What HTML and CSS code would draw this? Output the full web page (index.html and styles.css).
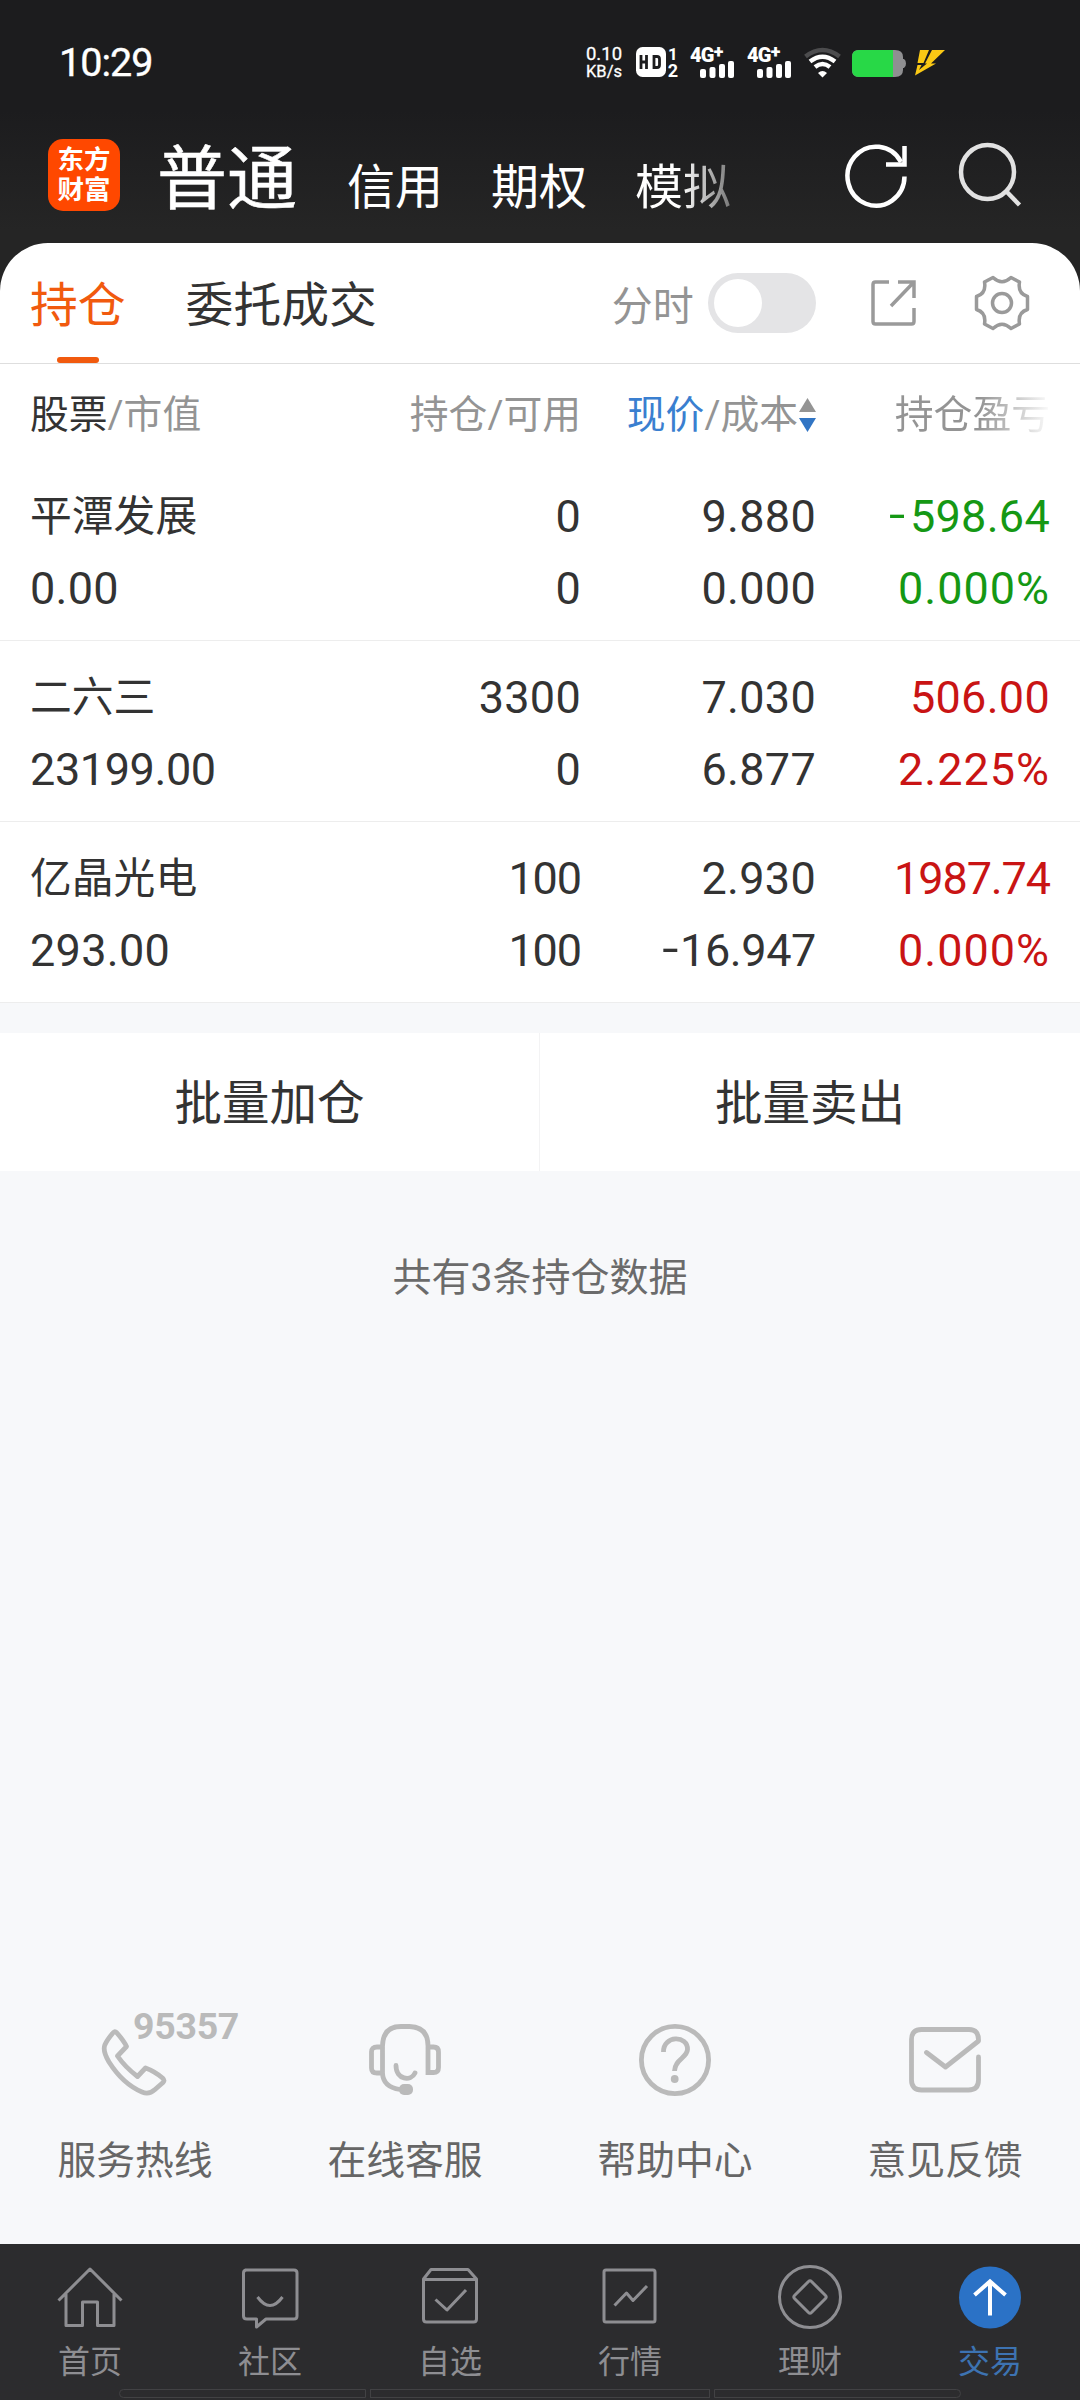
FILE: index.html
```html
<!DOCTYPE html>
<html lang="zh-CN">
<head>
<meta charset="utf-8">
<title>持仓</title>
<link rel="stylesheet" href="styles.css">
</head>
<body>
<div class="app">
  <header class="top">
    <div class="status">
      <span class="clock">10:29</span>
      <div class="indicators">
        <span class="net"><span>0.10</span><span>KB/s</span></span>
        <svg class="hd" width="31" height="31" viewBox="0 0 31 31"><rect width="30" height="30" rx="6.500" fill="#fff"/><path d="M5 8v14M10.500 8v14M5 15h5.500M18 9.500v11h3q2.500 0 2.500-2.500v-6q0-2.500-2.500-2.500z" fill="none" stroke="#1c1c1e" stroke-width="2.800"/></svg>
        <span class="sims"><span>1</span><span>2</span></span>
        <span class="sig"><span class="gen">4G<small>+</small></span><svg width="34" height="17" viewBox="0 0 34 17" fill="#fff"><rect y="8" width="6" height="9" rx="2"/><rect x="9.500" y="6" width="6" height="11" rx="2"/><rect x="19" y="3" width="6" height="14" rx="2"/><rect x="28" width="6" height="17" rx="2"/></svg></span>
        <span class="sig"><span class="gen">4G<small>+</small></span><svg width="34" height="17" viewBox="0 0 34 17" fill="#fff"><rect y="8" width="6" height="9" rx="2"/><rect x="9.500" y="6" width="6" height="11" rx="2"/><rect x="19" y="3" width="6" height="14" rx="2"/><rect x="28" width="6" height="17" rx="2"/></svg></span>
        <svg class="wifi" width="38" height="31" viewBox="0 0 38 31" fill="none"><path d="M1.500 9.500Q18.500-3.500 35.500 9.500" stroke="#4c4c4e" stroke-width="4.500"/><path d="M6 14.500Q18.500 5 31 14.500M11 20Q18.500 14 26 20" stroke="#fff" stroke-width="4.500"/><path d="M14 26q4.500-4 9 0l-4.500 4.500z" fill="#fff"/></svg>
        <svg class="batt" width="55" height="27" viewBox="0 0 55 27"><path d="M7 0h36q8 0 8 7v2h1q2 1 2 4.500t-2 4.500h-1v2q0 7-8 7H7q-7 0-7-7V7q0-7 7-7z" fill="#8f8f91"/><path d="M7 0h34v27H7q-7 0-7-7V7q0-7 7-7z" fill="#28d847"/></svg>
        <svg class="bolt" width="30" height="26" viewBox="0 0 30 26"><path d="M5 0h9L8.500 13H2.500zM17 0h13L16 13.500h5L0 25.500l2.500-10.500h4L4 20l8-6.500h-2z" fill="#fbc914"/></svg>
      </div>
    </div>
    <div class="brandbar">
      <div class="logo"><span>东方</span><span>财富</span></div>
      <nav class="modes"><span class="mode main">普通</span><span class="mode">信用</span><span class="mode">期权</span><span class="mode fade">模拟</span></nav>
      <svg class="refresh" width="64" height="66" viewBox="0 0 64 66" fill="none" stroke="#fff" stroke-width="4.500"><path d="M59.500 33.500A28.500 29.500 0 1 1 56 19"/><path d="M41 21.500h18.500V3"/></svg>
      <svg class="search" width="64" height="66" viewBox="0 0 64 66" fill="none" stroke="#e2e2e2" stroke-width="4.500"><ellipse cx="29.500" cy="30" rx="26.500" ry="27"/><path d="M48 49l13.500 14"/></svg>
    </div>
  </header>

  <main class="sheet">
    <div class="tabs">
      <span class="tab on">持仓</span>
      <span class="tab">委托成交</span>
      <span class="tick">分时</span>
      <span class="switch"></span>
      <svg class="share" width="46" height="48" viewBox="0 0 46 48" fill="none" stroke="#9a9a9a" stroke-width="3.500"><path d="M18 3H4.500Q2 3 2 5.500v37Q2 45 4.500 45h36q2.500 0 2.500-2.500V29M27 3h16v16M43 3L20 27"/></svg>
      <svg class="gear" width="56" height="56" viewBox="0 0 56 56" fill="none" stroke="#9a9a9a" stroke-width="3.500"><circle cx="28" cy="28" r="9.500"/><path d="M19 2.500q9 8.500 18 0l8.500 4.500q-2 11.500 8 14.500v13q-10 3-8 14.500l-8.500 4.500q-9-8.500-18 0l-8.500-4.500q2-11.500-8-14.500v-13q10-3 8-14.500z" stroke-linejoin="round"/></svg>
    </div>

    <div class="grid head">
      <span class="l"><b>股票</b>/市值</span>
      <span>持仓/可用</span>
      <span class="price"><i>现价</i>/成本<svg width="17" height="34" viewBox="0 0 17 34"><path d="M8.500 0L17 14H0z" fill="#949494"/><path d="M0 20h17L8.500 34z" fill="#3175c4"/></svg></span>
      <span class="profit">持仓盈亏</span>
    </div>
    <div class="grid row">
      <span class="l name">平潭发展</span><span>0</span><span>9.880</span><span class="down"><em>-</em>598.64</span>
      <span class="l">0.00</span><span>0</span><span>0.000</span><span class="down pct">0.000%</span>
    </div>
    <div class="grid row">
      <span class="l name">二六三</span><span>3300</span><span>7.030</span><span class="up">506.00</span>
      <span class="l snug">23199.00</span><span>0</span><span>6.877</span><span class="up pct">2.225%</span>
    </div>
    <div class="grid row">
      <span class="l name">亿晶光电</span><span class="tight">100</span><span>2.930</span><span class="up tight">1987.74</span>
      <span class="l">293.00</span><span class="tight">100</span><span class="snug"><em>-</em>16.947</span><span class="up pct">0.000%</span>
    </div>
  </main>

  <div class="batch"><span>批量加仓</span><span>批量卖出</span></div>
  <p class="count">共有3条持仓数据</p>

  <section class="help">
    <div class="link">
      <div class="pic phone"><svg width="72" height="72" viewBox="0 0 72 72" fill="none" stroke="#bababa" stroke-width="4.800" stroke-linejoin="round"><path d="M13.500 9.500Q8 16 5.800 21Q3.500 27 10 38Q24 60 43 68Q50 71 56 65.500L64 58.500Q66 56.500 63.500 54Q56 47.500 46.500 44L38.500 52.500Q26 43 18.500 32L27.500 22.500Q25 17 17.500 8.500Q15.500 6.500 13.500 9.500z"/></svg><span class="num">95357</span></div>
      <span>服务热线</span>
    </div>
    <div class="link">
      <div class="pic"><svg width="72" height="72" viewBox="0 0 72 72" fill="none" stroke="#bababa" stroke-width="4.800"><path d="M13.500 49V22Q14 2.500 32 2.500h8.500Q59 3 59 22v26.500h5.500q5 0 5-5V28q0-5-5-5H59M13.500 23H8q-5.500 0-5.500 5v16q0 5 5.500 5h5.500Q14 63 31 65.500"/><path d="M27 41.500C27 56 42 57.500 46 49" stroke-linecap="round"/><rect x="30" y="60" width="14" height="11" rx="5" fill="#bababa" stroke="none"/></svg></div>
      <span>在线客服</span>
    </div>
    <div class="link">
      <div class="pic"><svg width="72" height="72" viewBox="0 0 72 72" fill="none" stroke="#bababa" stroke-width="4.800"><circle cx="36" cy="36" r="33.600"/><path d="M24.500 28C24 11 49 11 48.500 25.500C48 34 36 35 35.500 47"/><circle cx="35.700" cy="55" r="3.900" fill="#bababa" stroke="none"/></svg></div>
      <span>帮助中心</span>
    </div>
    <div class="link">
      <div class="pic"><svg width="72" height="72" viewBox="0 0 72 72" fill="none" stroke="#bababa" stroke-width="4.800" stroke-linecap="round" stroke-linejoin="round"><path d="M69.500 33v23q0 10-10 10H12.500q-10 0-10-10V15.500q0-10 10-10H60q10 0 9.500 11.500L36.500 43L17.500 28.500"/></svg></div>
      <span>意见反馈</span>
    </div>
  </section>

  <nav class="tabbar">
    <div class="item"><svg width="66" height="66" viewBox="0 0 66 66"><path d="M1.500 35.500L33 4l31.500 31.500M9 29v31.500h16.500V37h15v23.500H57V29"/></svg><span>首页</span></div>
    <div class="item"><svg width="66" height="66" viewBox="0 0 66 66"><path d="M8 5h49Q60 5 60 8v43q0 3-3 3H29l-9.500 8v-8H10q-3.500 0-3.500-3V8q0-3 3-3M20.500 32q12.500 17 25 0"/></svg><span>社区</span></div>
    <div class="item"><svg width="66" height="66" viewBox="0 0 66 66"><path d="M6.500 14L14 4.500h37L59.500 14v40q0 3-3 3h-47q-3 0-3-3zM6.500 14.500h53M18.500 34.500L30 45l19-20"/></svg><span>自选</span></div>
    <div class="item"><svg width="66" height="66" viewBox="0 0 66 66"><rect x="7" y="5" width="51" height="52" rx="2"/><path d="M17.500 40.500L29.500 28l6.500 7.500L50 21"/></svg><span>行情</span></div>
    <div class="item"><svg width="66" height="66" viewBox="0 0 66 66"><circle cx="33" cy="32" r="30.500"/><path d="M31.500 16.500L17.500 30.500q-1.500 1.500 0 3l14 14q1.500 1.500 3 0l14-14q1.500-1.500 0-3l-14-14q-1.500-1.500-3 0z"/></svg><span>理财</span></div>
    <div class="item active"><svg width="66" height="66" viewBox="0 0 66 66"><circle cx="33" cy="32.500" r="31" class="disc"/><path d="M33 50.500V17M17.500 30L33 16.500L48.500 30" class="arrow"/></svg><span>交易</span></div>
    <div class="hints"><i></i><i></i><i></i></div>
  </nav>
</div>
</body>
</html>
```
FILE: styles.css
```css
* { box-sizing: border-box; }
body { margin: 0; background: #f7f8fa; font-family: Roboto, "Noto Sans CJK SC", sans-serif; color: #333; }
svg { display: block; flex: none; }
.app { width: 1080px; height: 2400px; display: flex; flex-direction: column; overflow: hidden; }

.top { height: 303px; flex: none; background: linear-gradient(#1c1c1e 110px, #252525 230px); color: #fff; }
.status { height: 124px; display: flex; padding: 0 135px 0 59px; justify-content: space-between; }
.clock { font-size: 39.500px; line-height: 125px; letter-spacing: -1px; -webkit-text-stroke: .4px #fff; }
.indicators { display: flex; align-items: flex-start; padding-top: 47px; }
.net { width: 38px; display: flex; flex-direction: column; align-items: center; font-size: 18.500px; line-height: 15px; margin-right: 13px; -webkit-text-stroke: .3px #fff; }
.net span + span { font-size: 16.500px; line-height: 19px; }
.hd { width: 31px; }
.sims { width: 12px; margin-right: 11px; display: flex; flex-direction: column; align-items: center; font-size: 17px; line-height: 14px; font-weight: 700; }
.sims span + span { line-height: 19px; font-size: 18px; }
.sig { width: 45px; height: 31px; margin-right: 12px; display: flex; flex-direction: column; align-items: flex-end; }
.gen { align-self: stretch; height: 14px; font-size: 20px; line-height: 16px; font-weight: 900; letter-spacing: -.8px; white-space: nowrap; }
.gen small { font-size: 18px; position: relative; top: -4px; }
.sig svg { margin-right: 1px; }
.wifi { margin-right: 10px; }
.batt { margin: 3px 8px 0 0; }
.bolt { margin-top: 3px; }

.brandbar { display: flex; height: 119px; padding: 15px 57px 0 48px; }
.logo { width: 72px; height: 72px; border-radius: 15px; background: #ff4800; display: flex; flex-direction: column; align-items: center; font-size: 26.500px; line-height: 30px; font-weight: 700; padding-top: 6px; }
.modes { display: flex; align-items: baseline; height: 90px; margin: -4px 0 0 37px; width: 684px; }
.mode { font-size: 48px; line-height: 90px; margin-right: 48px; }
.mode.main { font-size: 70px; margin-right: 50px; -webkit-text-stroke: .5px #fff; }
.fade { background: linear-gradient(90deg, #fff 48%, #777 100%); -webkit-background-clip: text; background-clip: text; color: transparent; }
.refresh { margin: 4px 0 0 4px; }
.search { margin: 3px 0 0 49px; }

.sheet { margin-top: -60px; background: #fff; border-radius: 48px 48px 0 0; flex: none; }
.tabs { height: 121px; border-bottom: 1px solid #dedede; display: flex; align-items: center; padding-left: 30px; }
.tab { font-size: 47.800px; line-height: 126px; height: 120px; margin-right: 60px; display: flex; flex-direction: column; }
.tab.on { color: #f15a0e; }
.tab.on::after { content: ""; width: 42px; height: 6px; border-radius: 3px; background: #f15a0e; align-self: center; margin-top: -12px; }
.tick { font-size: 41px; color: #949494; margin: -1px 0 0 175px; }
.switch { width: 108px; height: 60px; border-radius: 30px; background: #e4e4e6; margin-left: 14px; padding: 6px; }
.switch::before { content: ""; display: block; width: 48px; height: 48px; border-radius: 50%; background: #fff; }
.share { margin-left: 55px; }
.gear { margin-left: 57px; }

.grid { display: grid; grid-template-columns: 270px 281px 235px 234px; padding: 0 30px; text-align: right; }
.grid .l { text-align: left; }
.head { height: 96px; font-size: 38.800px; line-height: 101px; color: #949494; }
.head b { font-weight: 400; color: #333; }
.head i { font-style: normal; color: #3a7fd0; }
.price { display: flex; justify-content: flex-end; align-items: center; }
.price svg { margin-left: 1px; }
.head .profit { margin-left: 78px; width: 156px; background: linear-gradient(90deg, #949494 55%, #f7f7f7 98%); -webkit-background-clip: text; background-clip: text; color: transparent; }
.row { height: 181px; padding-top: 21px; grid-auto-rows: 72px; border-bottom: 1px solid #ededed; font-size: 45px; line-height: 72px; letter-spacing: .3px; }
.row .name { font-size: 41.800px; letter-spacing: 0; }
.row .pct { letter-spacing: 1px; }
.row .snug { letter-spacing: -.4px; }
.row .tight { letter-spacing: -1.100px; }
.row em { display: inline-block; font-style: normal; line-height: 1; transform: translateY(-2px) scaleX(1.300); margin-right: 6px; }
.row .snug em { margin-right: 4px; }
.down { color: #159814; }
.up { color: #c91414; }

.batch { margin-top: 30px; height: 138px; background: #fff; display: grid; grid-template-columns: 540px 540px; text-align: center; font-size: 47.500px; line-height: 142px; flex: none; }
.batch span { height: 138px; }
.batch span:first-child { border-right: 1px solid #f3f3f4; }
.count { margin: 77px 0 0; text-align: center; font-size: 39px; line-height: 60px; color: #6b6b6b; }

.help { margin-top: auto; height: 224px; display: grid; grid-template-columns: repeat(4, 270px); flex: none; }
.link { display: flex; flex-direction: column; align-items: center; font-size: 38.800px; line-height: 56px; color: #666; }
.pic { height: 72px; margin: 4px 0 37px; position: relative; }
.num { position: absolute; left: 34px; top: -13px; font-size: 37.500px; line-height: 31px; font-weight: 700; color: #bababa; letter-spacing: -.3px; }

.tabbar { height: 156px; background: #2c2c2e; display: grid; grid-template-columns: repeat(6, 180px); grid-template-rows: 145px 11px; flex: none; }
.item { display: flex; flex-direction: column; align-items: center; padding-top: 21px; font-size: 32px; line-height: 44px; color: #8e8e92; }
.item svg { fill: none; stroke: #8e8e92; stroke-width: 3; stroke-linejoin: round; }
.item span { margin-top: 9px; }
.active { color: #3d73b2; }
.item .disc { fill: #2b72c6; stroke: none; }
.item .arrow { stroke: #fff; stroke-width: 4; stroke-linejoin: miter; }
.hints { grid-column: 1 / -1; display: grid; grid-template-columns: 247px 340px 247px; gap: 4px; margin-left: 119px; height: 9px; }
.hints i { border: 1px solid #424244; }
.hints i:first-child { border-radius: 5px 0 0 5px; }
.hints i:last-child { border-radius: 0 5px 5px 0; }
```
